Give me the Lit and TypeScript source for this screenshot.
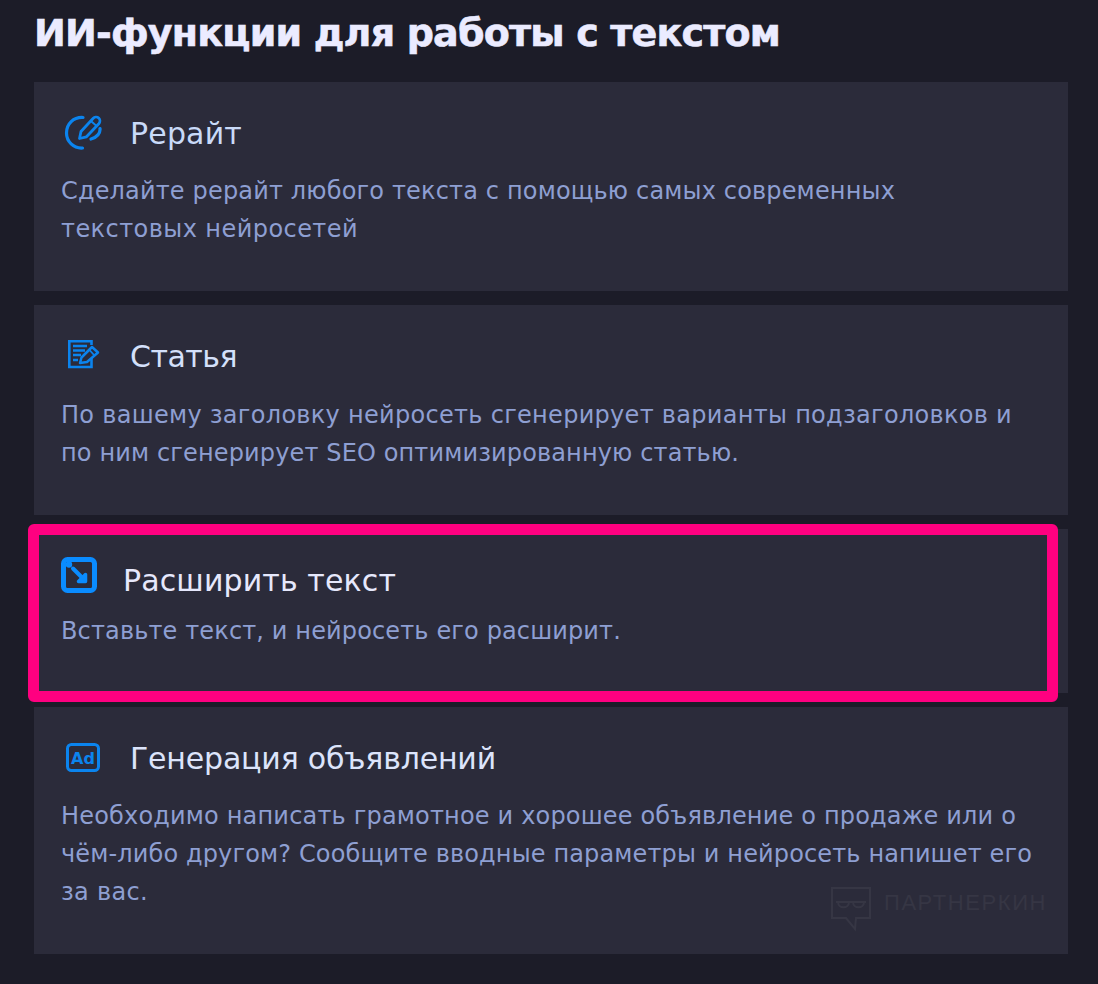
import { LitElement, html, css, svg } from "lit";
import { customElement } from "lit/decorators.js";

const icons = {
  rewrite: svg`<svg class="ic" width="38" height="38" viewBox="0 0 38 38" fill="none" stroke="#0b84ee" stroke-linecap="round" stroke-linejoin="round">
    <path d="M19 3.500C9.500 3 2.500 10 2.500 19C2.500 27.500 9.500 34.500 18.500 34" stroke-width="3.200"/>
    <path d="M36 14.500C36.500 19 33 23.500 27 25" stroke-width="3.200"/>
    <path d="M15.500 24.500L17 17.500L29 4.500C30.500 2.800 33 2.500 34.700 4C36.300 5.500 36.300 8 34.800 9.700L22.500 22.800Z" stroke-width="2.800"/>
    <path d="M27.500 7.500L32 11.500" stroke-width="1.800"/></svg>`,
  article: svg`<svg class="ic" width="38" height="38" viewBox="0 0 38 38" fill="none" stroke="#0b84ee">
    <path d="M27.500 19V30H5.300V4.300H27.500V8" stroke-width="2.600"/>
    <path d="M9 9H23M9 13.500H21M9 18H17M9 23H14" stroke-width="2.500"/>
    <path d="M16 26L17.500 20.500L28 10L34 15.500L23 25Z" fill="#2b2b3a" stroke-width="2.500" stroke-linejoin="round"/>
    <path d="M25.500 13L30 18" stroke-width="1.800"/></svg>`,
  expand: svg`<svg class="ic c3i" width="36" height="36" viewBox="0 0 36 36">
    <rect x="2.500" y="2.500" width="31" height="31" rx="4" fill="#2b2b3a" stroke="#0a8cff" stroke-width="5"/>
    <circle cx="8" cy="7.500" r="3.200" fill="#0a8cff"/>
    <path d="M12 11.500L21 20.500" stroke="#0a8cff" stroke-width="4" stroke-linecap="round"/>
    <path d="M24.500 17.500V24.500H17.500Z" fill="#0a8cff" stroke="#0a8cff" stroke-width="3.500" stroke-linejoin="round"/></svg>`,
  ad: svg`<svg class="ic" width="38" height="38" viewBox="0 0 38 38" fill="none">
    <rect x="3.500" y="5.500" width="31" height="26" rx="4" stroke="#0b84ee" stroke-width="3"/>
    <text x="19" y="24.800" text-anchor="middle" fill="#0b84ee" font-family="'DejaVu Sans',sans-serif" font-weight="700" font-size="16">Ad</text></svg>`,
};

const cards = [
  { icon: icons.rewrite, title: "Рерайт", tw: 112, mod: "", lines: [["Сделайте рерайт любого текста с помощью самых современных", 834], ["текстовых нейросетей", 297]] },
  { icon: icons.article, title: "Статья", tw: 107, mod: "c2", lines: [["По вашему заголовку нейросеть сгенерирует варианты подзаголовков и", 951], ["по ним сгенерирует SEO оптимизированную статью.", 678]] },
  { icon: icons.expand, title: "Расширить текст", tw: 273, mod: "c3", lines: [["Вставьте текст, и нейросеть его расширит.", 560]] },
  { icon: icons.ad, title: "Генерация объявлений", tw: 366, mod: "c4", lines: [["Необходимо написать грамотное и хорошее объявление о продаже или о", 955], ["чём-либо другом? Сообщите вводные параметры и нейросеть напишет его", 971], ["за вас.", 87]] },
];

@customElement("app-root")
export class AppRoot extends LitElement {
  static styles = css`
    :host { display: block; position: relative; width: 1098px; height: 984px; overflow: hidden; background: #1c1c28; font-family: "DejaVu Sans", "Noto Sans", sans-serif; }
    .page { padding: 8px 30px 0 34px; display: flex; flex-direction: column; }
    h1 { margin: 0 0 12px; height: 62px; line-height: 50px; font-size: 38px; font-weight: 700; color: #ebebff; white-space: nowrap; -webkit-text-stroke: 0.6px #ebebff; }
    .cards { display: flex; flex-direction: column; gap: 14px; }
    .card { position: relative; background: #2b2b3a; padding: 21px 27px 43px; }
    .head { height: 60px; display: flex; align-items: center; gap: 28px; margin: 0 0 9px 3px; }
    .c2 .head { margin-bottom: 10px; }
    .c3 .head { margin: 0 0 2px; gap: 26px; }
    .c3i { margin-bottom: 11px; }
    .ic { display: block; flex: none; }
    .title { font-size: 30px; color: #c9daf8; white-space: nowrap; }
    .c2 .title { color: #d4e0fa; }
    .c3 .title { color: #e6e8fc; }
    .c4 .title { color: #dce4fb; }
    .line { height: 38px; line-height: 38px; font-size: 24px; color: #8e9fd2; white-space: nowrap; }
    .hl { position: absolute; left: 28px; top: 524px; width: 1030px; height: 178px; box-sizing: border-box; border: 11px solid #ff0080; border-radius: 6px; }
    .wm { position: absolute; right: 21px; bottom: 22px; display: flex; align-items: center; gap: 12px; color: #363644; }
    .wm span { font-family: "Liberation Sans", sans-serif; font-size: 22px; font-weight: 400; padding-bottom: 12px; white-space: nowrap; }
    .wm svg { display: block; }
  `;

  firstUpdated() {
    const root = this.renderRoot as ShadowRoot;
    root.querySelectorAll<HTMLElement>("[data-w]").forEach((el) => {
      const target = Number(el.dataset.w);
      const r = document.createRange();
      r.selectNodeContents(el);
      el.style.letterSpacing = "0px";
      const w = r.getBoundingClientRect().width;
      const n = (el.textContent || "").length;
      el.style.letterSpacing = `${(target - w) / n}px`;
    });
  }

  render() {
    return html`<div class="page">
      <h1 data-w="746">ИИ-функции для работы с текстом</h1>
      <div class="cards">
        ${cards.map((c) => html`<div class="card ${c.mod}">
          <div class="head">${c.icon}<div class="title" data-w=${c.tw}>${c.title}</div></div>
          ${c.lines.map((l) => html`<div class="line" data-w=${l[1]}>${l[0]}</div>`)}
          ${c === cards[3]
            ? html`<div class="wm">
                <svg width="42" height="46" viewBox="0 0 42 46" fill="none" stroke="#363644" stroke-width="2">
                  <path d="M2 2H40V32H26L25 43L16 32H2Z"/>
                  <path d="M6 16H36M8 16C8 23 19 23 19 16M23 16C23 23 34 23 34 16"/>
                </svg>
                <span data-w="163">ПАРТНЕРКИН</span>
              </div>`
            : ""}
        </div>`)}
      </div>
    </div>
    <div class="hl"></div>`;
  }
}
